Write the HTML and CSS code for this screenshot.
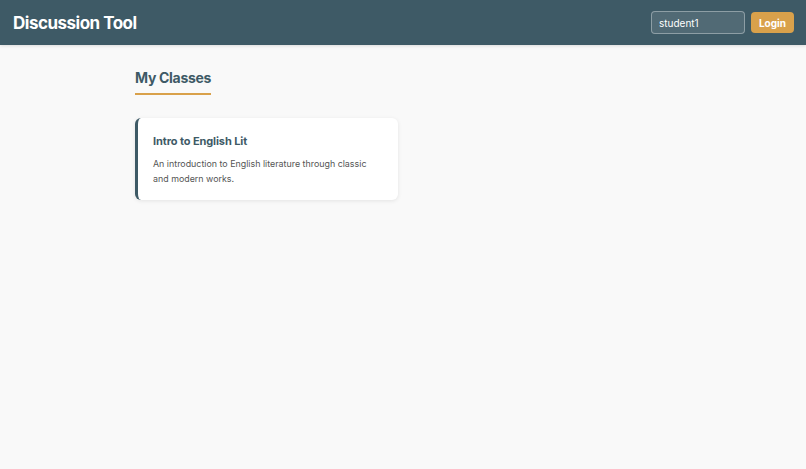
FILE: index.html
```html
<!DOCTYPE html>
<html lang="en">
<head>
<meta charset="utf-8">
<title>Discussion Tool</title>
<link rel="stylesheet" href="styles.css">
</head>
<body>
<header class="topbar">
  <h1 class="brand">Discussion Tool</h1>
  <div class="login">
    <input class="user-input" type="text" value="student1">
    <button class="login-btn">Login</button>
  </div>
</header>
<main class="container">
  <h2 class="section-title">My Classes</h2>
  <div class="class-grid">
    <div class="class-card">
      <h3 class="class-name">Intro to English Lit</h3>
      <p class="class-desc">An introduction to English literature through classic and modern works.</p>
    </div>
  </div>
</main>
</body>
</html>
```
FILE: styles.css
```css
* { box-sizing: border-box; }
html, body { height: 100%; }
body {
  margin: 0;
  background: #f9f9f9;
  font-family: Inter, "Noto Sans", "Liberation Sans", sans-serif;
  color: #333;
}
.topbar {
  height: 45px;
  background: #3e5a66;
  display: flex;
  align-items: center;
  justify-content: space-between;
  padding: 0 12px 0 13px;
  box-shadow: 0 1px 3px rgba(0,0,0,0.12);
}
.brand {
  margin: 0;
  color: #fff;
  font-size: 17px;
  font-weight: 700;
  letter-spacing: -0.5px;
}
.login {
  display: flex;
  align-items: center;
  gap: 6px;
}
.user-input {
  width: 94px;
  height: 23px;
  border: 1px solid rgba(255,255,255,0.35);
  background: rgba(255,255,255,0.1);
  border-radius: 4px;
  color: #fff;
  font-family: inherit;
  font-size: 10px;
  padding: 0 7px;
  outline: none;
}
.login-btn {
  height: 21px;
  width: 43px;
  border: none;
  border-radius: 4px;
  background: #d9a14b;
  color: #fff;
  font-family: inherit;
  font-size: 10px;
  font-weight: 700;
  padding: 0;
}
.container {
  width: 536px;
  margin: 0 auto;
  padding-top: 22px;
}
.section-title {
  display: inline-block;
  margin: 0;
  color: #3e5a66;
  font-size: 14px;
  font-weight: 700;
  letter-spacing: -0.3px;
  padding-bottom: 7px;
  border-bottom: 2px solid #d9a14b;
}
.class-grid {
  margin-top: 23px;
  display: grid;
  grid-template-columns: 1fr 1fr;
  gap: 10px;
}
.class-card {
  background: #fff;
  border-left: 3px solid #3e5a66;
  border-radius: 6px;
  box-shadow: 0 1px 4px rgba(0,0,0,0.09);
  padding: 16px 15px 15px 15px;
  height: 82px;
}
.class-name {
  margin: 0 0 8px;
  font-size: 11px;
  font-weight: 700;
  letter-spacing: -0.1px;
  color: #3e5a66;
}
.class-desc {
  margin: 0;
  font-size: 8.9px;
  line-height: 15px;
  color: #555;
}
```
